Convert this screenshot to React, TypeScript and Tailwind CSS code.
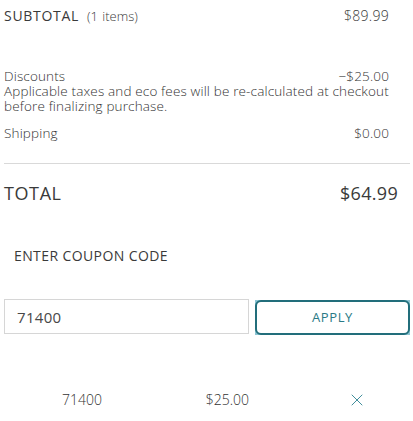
import { X } from "lucide-react";

const font = { fontFamily: "'Open Sans', 'Noto Sans', sans-serif" };

export default function App() {
	return (
		<div className="w-[413px] h-[421px] bg-white text-[#3a3a3a] overflow-hidden" style={font}>
			<div className="pl-1 pr-[3px]">
				<div className="flex items-center justify-between pt-[7px] pr-[21px] h-[24px]">
					<div className="flex items-baseline gap-[8px]">
						<span className="text-[14px] tracking-[0.7px]">SUBTOTAL</span>
						<span className="text-[13px] font-light [word-spacing:1px]">(1 items)</span>
					</div>
					<span className="text-[14px] font-light tracking-[0.3px]">$89.99</span>
				</div>

				<div className="mt-[44px] text-[13.5px] font-light leading-[15px] tracking-[0.15px] text-[#333]">
					<div className="flex justify-between pr-[21px] leading-[16px]">
						<span>Discounts</span>
						<span>−$25.00</span>
					</div>
					<p>Applicable taxes and eco fees will be re-calculated at checkout before finalizing purchase.</p>
					<div className="flex justify-between pr-[21px] mt-[12px]">
						<span>Shipping</span>
						<span>$0.00</span>
					</div>
				</div>

				<div className="mt-[22px] border-t border-[#d9d9d9]" />

				<div className="flex items-center justify-between pr-[12px] mt-[16px]">
					<span className="text-[18px] tracking-[0.6px]">TOTAL</span>
					<span className="text-[18px] tracking-[0.3px]">$64.99</span>
				</div>

				<div className="mt-[38px] pl-[10px] text-[14px] tracking-[0.4px]">ENTER COUPON CODE</div>

				<div className="flex gap-[6px] mt-[33px]">
					<input
						className="w-[245px] h-[35px] border border-[#d6d6d6] px-[12px] text-[15px] text-[#484848] tracking-[0.3px] outline-none"
						style={font}
						defaultValue="71400"
						readOnly
					/>
					<div className="w-[155px] h-[35px] mt-[1px] bg-[#8cc5d3]">
						<button
							className="w-full h-full rounded-[6px] border-2 border-[#226e7b] bg-white text-[13px] tracking-[0.6px] text-[#2a7a86]"
							style={font}
						>
							APPLY
						</button>
					</div>
				</div>

				<div className="flex items-center mt-[54px] text-[14px] font-light text-[#333]">
					<span className="w-[98px] text-right">71400</span>
					<span className="w-[147px] text-right">$25.00</span>
					<span className="ml-[98px] text-[#2f8392]">
						<X size={20} strokeWidth={1.1} />
					</span>
				</div>
			</div>
		</div>
	);
}
